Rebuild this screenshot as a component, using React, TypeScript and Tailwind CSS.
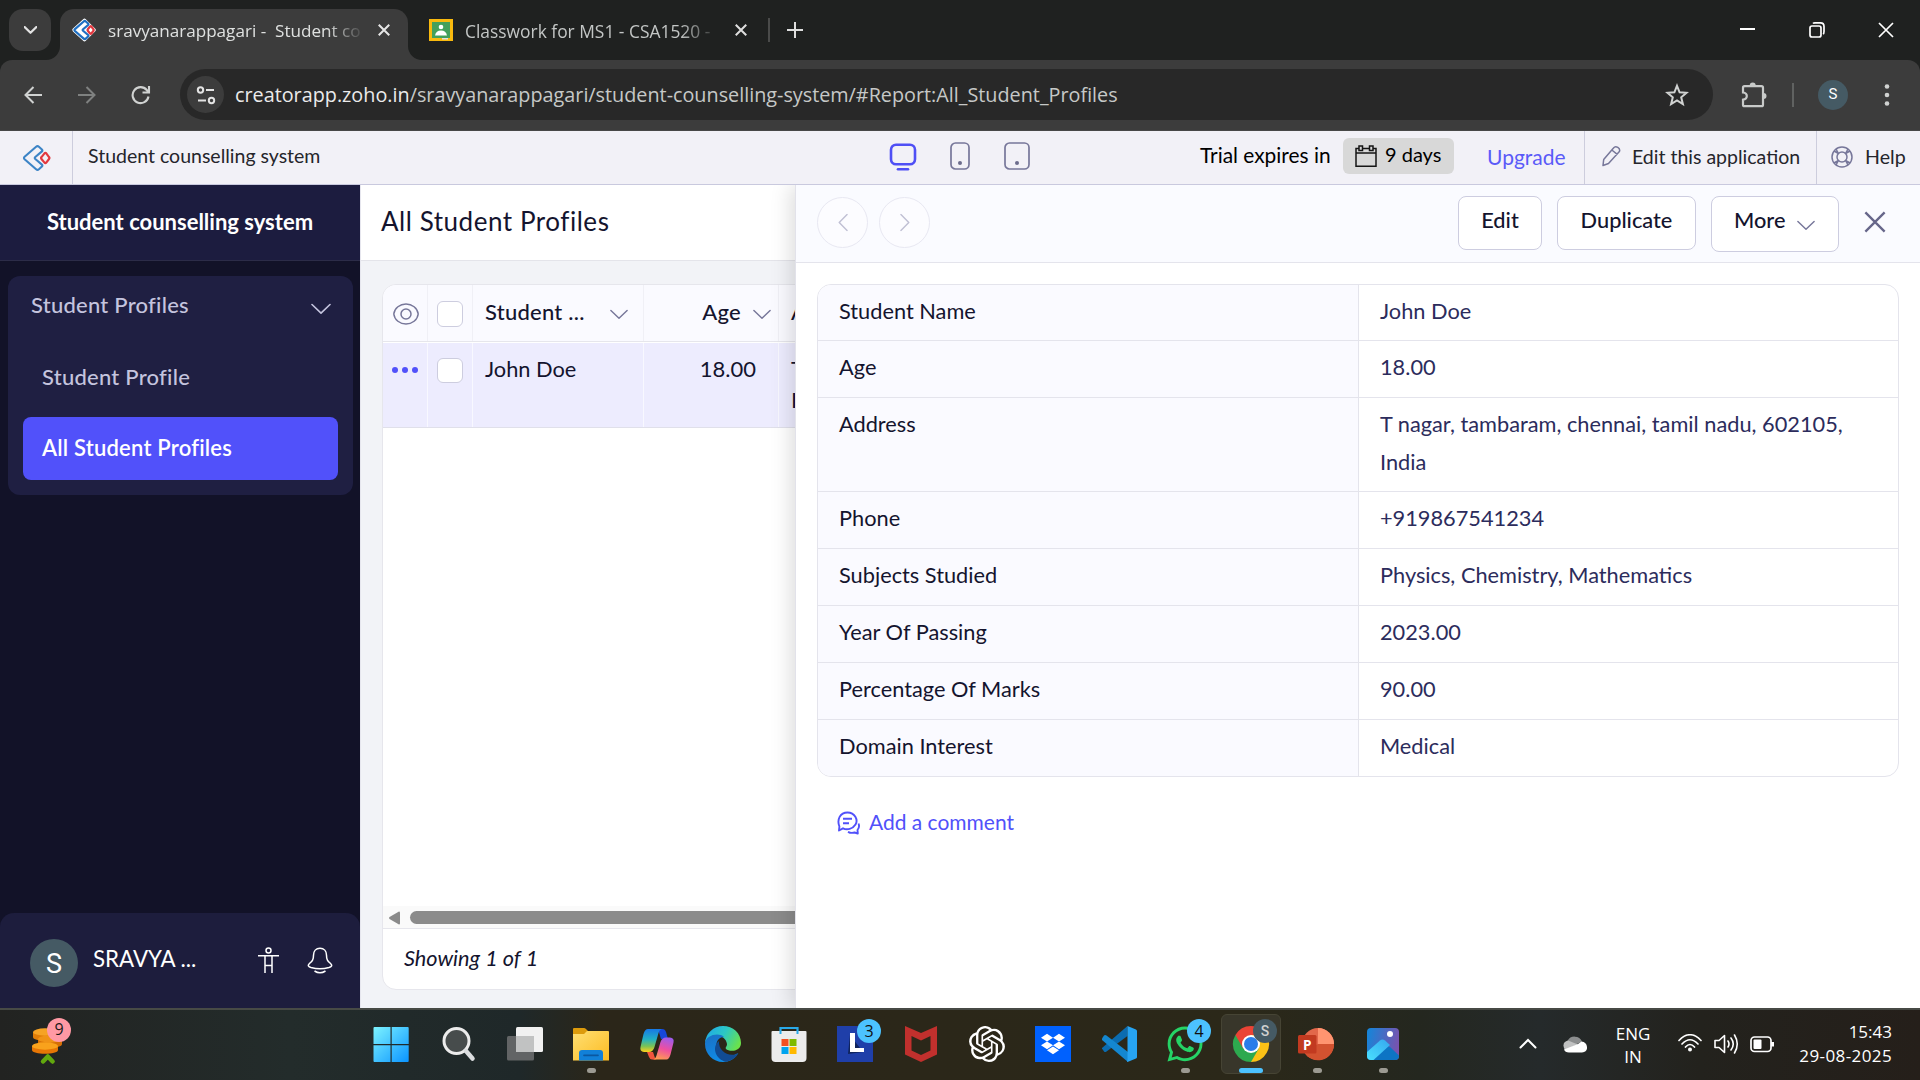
import React from "react";
import { SiOpenai } from "react-icons/si";
import { FaDropbox, FaWhatsapp } from "react-icons/fa";

const details = [
  { label: "Student Name", value: ["John Doe"] },
  { label: "Age", value: ["18.00"] },
  { label: "Address", value: ["T nagar, tambaram, chennai, tamil nadu, 602105,", "India"] },
  { label: "Phone", value: ["+919867541234"] },
  { label: "Subjects Studied", value: ["Physics, Chemistry, Mathematics"] },
  { label: "Year Of Passing", value: ["2023.00"] },
  { label: "Percentage Of Marks", value: ["90.00"] },
  { label: "Domain Interest", value: ["Medical"] },
];

function Chevron({ className, sw = 1.6 }: { className: string; sw?: number }) {
  return (
    <svg viewBox="0 0 20 12" fill="none" stroke="currentColor" strokeWidth={sw} className={className}>
      <path d="M1 1.5l9 8.700 9-8.700" strokeLinecap="round" strokeLinejoin="round" />
    </svg>
  );
}

function Cross({ className, sw = 1.6 }: { className: string; sw?: number }) {
  return (
    <svg viewBox="0 0 16 16" fill="none" stroke="currentColor" strokeWidth={sw} className={className}>
      <path d="M1 1l14 14M15 1L1 15" />
    </svg>
  );
}

function CreatorLogo({ className, backed }: { className: string; backed?: boolean }) {
  return (
    <svg viewBox="0 0 29 28" fill="none" className={className}>
      {backed && (
        <path d="M15.500 1.500L2 14l13.500 12.500L28 14z" fill="#fff" stroke="#fff" strokeWidth="5" strokeLinejoin="round" transform="translate(-.4 0)" />
      )}
      <path
        d="M14.100 2.800L2.600 12.700q-1.300 1.300 0 2.600l11.500 10q1.400 1.200 2.800 0l3-2.700q1-1.100 0-2l-6.600-5.600q-1.100-1 0-2l6.600-5.600q1-1 0-2l-3-2.600q-1.400-1.200-2.800 0z"
        stroke={backed ? "#1f6fc2" : "#3c84c6"}
        strokeWidth={backed ? 3 : 2.1}
      />
      <path
        d="M22.500 9.400l-3 3.700q-.8.900 0 1.900l3 3.600q.9 1 1.800 0l2.700-3.600q.8-1 0-1.900l-2.700-3.700q-.9-.9-1.800 0z"
        stroke="#e2383f"
        strokeWidth={backed ? 2.900 : 2.200}
      />
    </svg>
  );
}

function TabStrip() {
  return (
    <div className="flex h-[60px] shrink-0 bg-[#1f2120] font-['Open_Sans',sans-serif] text-[17.4px]">
      <div className="mt-[9px] ml-[9px] flex h-[42px] w-[42px] items-center justify-center rounded-[14px] bg-[#3c3c3c] text-[#e3e3e3]">
        <Chevron className="h-[8px] w-[13px]" sw={3.4} />
      </div>
      <div className="relative mt-[9px] ml-[9px] flex h-[51px] w-[348px] rounded-t-[14px] bg-[#3c3c3c] text-[#dfe1e0]">
        <svg viewBox="0 0 14 14" className="absolute bottom-0 -left-[14px] h-[14px] w-[14px]"><path d="M14 0v14H0A14 14 0 0014 0z" fill="#3c3c3c" /></svg>
        <svg viewBox="0 0 14 14" className="absolute -right-[14px] bottom-0 h-[14px] w-[14px]"><path d="M0 0v14h14A14 14 0 010 0z" fill="#3c3c3c" /></svg>
        <CreatorLogo backed className="mt-[8px] ml-[11px] h-[26px] w-[26px] shrink-0 overflow-visible p-[2px]" />
        <div className="ml-[11px] w-[254px] text-[17.100px] leading-[44px] whitespace-pre [mask-image:linear-gradient(90deg,#000_86%,transparent_101%)]">sravyanarappagari -  Student co</div>
        <Cross className="mt-[15px] ml-[16px] h-[12px] w-[12px] text-[#e6e6e6]" sw={2.700} />
      </div>
      <svg viewBox="0 0 24 22" className="mt-[19px] ml-[21px] h-[22px] w-[24px]">
        <rect width="24" height="22" fill="#f8b90e" />
        <rect x="3" y="3" width="18" height="16" fill="#43a05c" />
        <circle cx="12" cy="8" r="2.300" fill="#fff" />
        <path d="M6 16.500q1-5 6-5t6 5z" fill="#fff" />
        <path d="M13 19h6v1.500h-6z" fill="#e0e0e0" />
      </svg>
      <div className="mt-[9px] ml-[12px] w-[250px] leading-[44px] whitespace-nowrap text-[#c3c6c5] [mask-image:linear-gradient(90deg,#000_86%,transparent_102%)]">Classwork for MS1 - CSA1520 -</div>
      <Cross className="mt-[24px] ml-[20px] h-[12px] w-[12px] text-[#dedede]" sw={2.700} />
      <div className="mt-[18px] ml-[21px] h-[24px] w-[2px] bg-[#4a4b4a]" />
      <svg viewBox="0 0 16 16" className="mt-[22px] ml-[17px] h-[16px] w-[16px]" stroke="#dedede" strokeWidth="2"><path d="M8 0v16M0 8h16" /></svg>
      <div className="ml-auto flex items-start text-white">
        <div className="mt-[28px] h-[2px] w-[15px] bg-white" />
        <svg viewBox="0 0 16 16" className="mt-[22px] ml-[54px] h-[16px] w-[16px]" fill="none" stroke="#fff" strokeWidth="1.700">
          <rect x="1" y="4" width="11" height="11" rx="2" />
          <path d="M4 1.500q.500-.6 2-.6h5.500q3.500 0 3.500 3.500v5q0 2-1 2.500" />
        </svg>
        <Cross className="mt-[22px] mr-[26px] ml-[53px] h-[16px] w-[16px]" sw={1.700} />
      </div>
    </div>
  );
}

function Toolbar() {
  return (
    <div className="h-[71px] shrink-0 bg-[#1f2120]">
      <div className="flex h-full items-center rounded-t-[12px] border-b border-[#484848] bg-[#3c3c3c] pb-[1px]">
        <svg viewBox="0 0 18 18" className="ml-[24px] h-[18px] w-[18px]" fill="none" stroke="#d0d2d1" strokeWidth="2"><path d="M18 9H1.500M9.500 1L1.500 9l8 8" /></svg>
        <svg viewBox="0 0 18 18" className="ml-[36px] h-[18px] w-[18px]" fill="none" stroke="#7f8180" strokeWidth="2"><path d="M0 9h16.500M8.500 1l8 8-8 8" /></svg>
        <svg viewBox="0 0 20 20" className="ml-[35px] h-[20px] w-[20px]" fill="none" stroke="#d0d2d1" strokeWidth="2.100"><path d="M17.500 11.500a8 8 0 11-1.700-6.500l1.800 2M18 1v6.500h-6.500" /></svg>
        <div className="ml-[29px] flex h-[51px] w-[1533px] items-center rounded-full bg-[#282828] pl-[7px]">
          <div className="flex h-[37px] w-[37px] items-center justify-center rounded-full bg-[#3c3c3c]">
            <svg viewBox="0 0 20 20" className="h-[20px] w-[20px]" fill="none" stroke="#e3e3e3" strokeWidth="2"><circle cx="4.500" cy="5" r="2.700" /><path d="M10 5h8M2 15.500h8" /><circle cx="15.500" cy="15.500" r="2.700" /></svg>
          </div>
          <div className="ml-[11px] font-['Open_Sans',sans-serif] text-[19.8px] leading-[50px] whitespace-nowrap text-[#c6c8c7]">
            <span className="text-[#ebebeb]">creatorapp.zoho.in</span>/sravyanarappagari/student-counselling-system/#Report:All_Student_Profiles
          </div>
          <svg viewBox="0 0 24 24" className="mr-[24px] ml-auto h-[24px] w-[24px]" fill="none" stroke="#d0d2d1" strokeWidth="2"><path d="M12 2.800l2.600 6.500 7 .5-5.400 4.500 1.700 6.900-5.900-3.700-5.900 3.700 1.700-6.900-5.400-4.500 7-.5z" /></svg>
        </div>
        <svg viewBox="0 0 26 26" className="ml-[28px] h-[26px] w-[26px]" fill="none" stroke="#c8cac9" strokeWidth="2.200">
          <path d="M3.500 4.200h17q1.500 0 1.500 1.500v17q0 1.500-1.500 1.500h-17q-1.500 0-1.500-1.500v-5q3.800-.4 3.800-3.600T2 10.500V5.700q0-1.500 1.500-1.500z" />
          <path d="M8.700 3.500a3 3 0 016 0zM22.500 11a3 3 0 010 6z" fill="#c8cac9" stroke="none" />
        </svg>
        <div className="ml-[25px] h-[24px] w-[2px] bg-[#606261]" />
        <div className="ml-[24px] flex h-[30px] w-[30px] items-center justify-center rounded-full bg-[#455a64] font-['Roboto',sans-serif] text-[15px] text-white">S</div>
        <svg viewBox="0 0 6 24" className="ml-[36px] h-[24px] w-[6px]" fill="#d0d2d1"><circle cx="3" cy="3.500" r="2.300" /><circle cx="3" cy="12" r="2.300" /><circle cx="3" cy="20.500" r="2.300" /></svg>
      </div>
    </div>
  );
}

function AppHeader() {
  return (
    <div className="flex h-[54px] shrink-0 border-b border-[#c9c9de] bg-[#f2f1f7] text-[#25252b]">
      <div className="flex w-[73px] border-r border-[#cdcddd]"><CreatorLogo className="mt-[13px] ml-[22px] h-[28px] w-[29px]" /></div>
      <div className="w-[814px] pl-[15px] text-[19.500px] leading-[49px]">Student counselling system</div>
      <svg viewBox="0 0 30 30" className="mt-[11px] h-[30px] w-[30px]" fill="none" stroke="#4f4ff5" strokeWidth="2.600"><rect x="4" y="2.700" width="24" height="19.500" rx="5" /><path d="M11 27.300h10" strokeLinecap="round" /></svg>
      <svg viewBox="0 0 20 28" className="mt-[11px] ml-[33px] h-[28px] w-[20px]" fill="none" stroke="#77779a" strokeWidth="1.700"><rect x="1" y="1" width="18" height="26" rx="4.500" /><circle cx="10" cy="21" r="2" fill="#6c6c8c" stroke="none" /></svg>
      <svg viewBox="0 0 26 28" className="mt-[11px] ml-[34px] h-[28px] w-[26px]" fill="none" stroke="#77779a" strokeWidth="1.700"><rect x="1" y="1" width="24" height="26" rx="4.500" /><circle cx="13" cy="21" r="2" fill="#6c6c8c" stroke="none" /></svg>
      <div className="ml-auto flex w-[384px] text-[20.900px] leading-[48px] whitespace-nowrap text-black">
        <div className="w-[143px]">Trial expires in</div>
        <div className="mt-[7px] flex h-[36px] w-[111px] rounded-[6px] bg-[#d8d8d8] pl-[12px] text-[20px] leading-[33px]">
          <svg viewBox="0 0 22 22" className="mt-[7px] mr-[8px] h-[22px] w-[22px]" fill="none" stroke="#151515" strokeWidth="1.500"><path d="M4 3.500H1v17.700h20V3.500h-3M7.500 3.500h7M1 8h20" /><rect x="4" y="1" width="3.500" height="4.500" /><rect x="14.500" y="1" width="3.500" height="4.500" /></svg>
          9 days
        </div>
        <div className="pl-[33px] text-[21px] leading-[51px] text-[#5a5af8]">Upgrade</div>
      </div>
      <div className="flex w-[232px] border-l border-[#cdcddd] pl-[16px] text-[19.500px] leading-[51px] whitespace-nowrap">
        <svg viewBox="0 0 20 22" className="mt-[14px] mr-[11px] h-[22px] w-[20px]" fill="none" stroke="#77779a" strokeWidth="1.500" strokeLinejoin="round"><path d="M12.500 3q1.700-2.200 4.300-.6t1.600 4.200L7.500 18.500 2 20.500l.7-6zM10.800 5l5.500 4.300" /></svg>
        <span>Edit this application</span>
      </div>
      <div className="flex w-[104px] border-l border-[#cdcddd] pl-[14px] text-[19.600px] leading-[51px]">
        <svg viewBox="0 0 22 22" className="mt-[15px] mr-[12px] h-[22px] w-[22px]" fill="none" stroke="#77779a" strokeWidth="1.500"><circle cx="11" cy="11" r="10" /><circle cx="11" cy="11" r="5" /><path d="M3 5l4.500 2.500M5 3l2.500 4.500M19 5l-4.500 2.500M17 3l-2.500 4.500M3 17l4.500-2.500M5 19l2.500-4.500M19 17l-4.500-2.500M17 19l-2.500-4.500" /></svg>
        Help
      </div>
    </div>
  );
}

function Sidebar() {
  return (
    <div className="flex w-[360px] shrink-0 flex-col bg-[#121228]">
      <div className="h-[76px] border-b border-[#2c2c48] bg-[#1c1c3f] text-center text-[22px] leading-[74px] font-bold text-white">Student counselling system</div>
      <div className="mt-[15px] ml-[8px] flex h-[219px] w-[345px] flex-col rounded-[12px] bg-[#1f1f42] text-[22px] font-medium tracking-[0.240px] text-[#c4c4de]">
        <div className="flex justify-between pr-[22px] pl-[23px] leading-[57px]">
          Student Profiles
          <Chevron className="mt-[27px] h-[12px] w-[20px]" />
        </div>
        <div className="pt-[8px] pl-[34px] leading-[71px]">Student Profile</div>
        <div className="mt-[5px] ml-[15px] h-[63px] w-[315px] rounded-[8px] bg-[#5151fa] pl-[19px] leading-[61px] font-semibold tracking-[0.200px] text-white">All Student Profiles</div>
      </div>
      <div className="mt-auto flex h-[95px] rounded-t-[14px] bg-[#1d1d3d] text-white">
        <div className="mt-[26px] ml-[30px] flex h-[48px] w-[48px] items-center justify-center rounded-full bg-[#455a64] pt-[2px] font-['Roboto',sans-serif] text-[27px]">S</div>
        <div className="ml-[15px] w-[164px] text-[22.300px] leading-[92px]">SRAVYA ...</div>
        <svg viewBox="0 0 22 28" className="mt-[34px] h-[28px] w-[22px]" fill="none" stroke="#fff" strokeWidth="1.500"><circle cx="11.500" cy="3.500" r="2.500" /><path d="M1 8.700h21M8 9v17M15 9v17M8 18.500h7" /></svg>
        <svg viewBox="0 0 26 28" className="mt-[34px] ml-[28px] h-[28px] w-[26px]" fill="none" stroke="#fff" strokeWidth="1.500"><path d="M13 1.200c-4 0-6.500 3-6.500 7 0 5-1.500 6-4 8.300-2.500 2.300-.5 3.300 1.500 4q9 2.400 18 0c2-.7 4-1.700 1.500-4-2.500-2.300-4-3.300-4-8.300 0-4-2.500-7-6.500-7zM7.500 24q5.500 3.500 11 0" /></svg>
      </div>
    </div>
  );
}

function Checkbox({ className }: { className: string }) {
  return <div className={"w-[26px] rounded-[6px] border border-[#cdcddf] bg-white " + className} />;
}

function ReportList() {
  return (
    <div className="flex w-[435px] shrink-0 flex-col overflow-hidden border-l border-[#e6e6ee] bg-[#f2f3f7] text-[22px] text-[#14142e]">
      <div className="h-[76px] border-b border-[#e4e4ea] bg-white pl-[20px] text-[26px] leading-[72px] tracking-[0.540px]">All Student Profiles</div>
      <div className="mt-[23px] ml-[21px] flex h-[706px] w-[900px] flex-col overflow-hidden rounded-[14px] border border-[#e6e6ec] bg-white">
        <div className="flex h-[57px] border-b border-[#e6e6ec] bg-[#fafaff] leading-[53px] font-medium tracking-[0.240px]">
          <div className="flex w-[45px] border-r border-[#f0f0f6] pl-[10px]">
            <svg viewBox="0 0 26 22" className="mt-[18px] h-[22px] w-[26px]" fill="none" stroke="#77779a" strokeWidth="1.500"><path d="M.8 11C1.500 5 7 1 13 1s11.500 4 12.200 10C24.500 17 19 21 13 21S1.500 17 .8 11z" /><circle cx="13" cy="11" r="5" /></svg>
          </div>
          <div className="w-[45px] border-r border-[#f0f0f6] pt-[16px] pl-[9px]"><Checkbox className="h-[26px]" /></div>
          <div className="flex w-[171px] border-r border-[#f0f0f6] pl-[12px]">
            <div className="w-[125px]">Student ...</div>
            <Chevron className="mt-[24px] h-[11px] w-[18px] text-[#77779a]" />
          </div>
          <div className="flex w-[135px] justify-end border-r border-[#f0f0f6] pr-[7px]">
            Age
            <Chevron className="mt-[24px] ml-[12px] h-[11px] w-[18px] text-[#77779a]" />
          </div>
          <div className="pl-[12px]">Address</div>
        </div>
        <div className="mt-[1px] flex h-[85px] border-b border-[#e0e0ea] bg-[#edecfe] leading-[31px]">
          <div className="flex w-[45px] gap-[4px] border-r border-[#f8f8ff] pt-[24px] pl-[9px]">
            <div className="h-[6px] w-[6px] rounded-full bg-[#5151fa]" />
            <div className="h-[6px] w-[6px] rounded-full bg-[#5151fa]" />
            <div className="h-[6px] w-[6px] rounded-full bg-[#5151fa]" />
          </div>
          <div className="w-[45px] border-r border-[#f8f8ff] pt-[15px] pl-[9px]"><Checkbox className="h-[25px]" /></div>
          <div className="w-[171px] border-r border-[#f8f8ff] pt-[10px] pl-[12px] text-[21.800px]">John Doe</div>
          <div className="w-[135px] border-r border-[#f8f8ff] pt-[10px] pr-[22px] text-right">18.00</div>
          <div className="pt-[10px] pl-[12px]">T nagar,<br />India</div>
        </div>
        <div className="mt-auto flex h-[22px] items-center bg-[#fafafa] pt-[1px] pl-[6px]">
          <svg viewBox="0 0 11 14" className="h-[14px] w-[11px]" fill="#8a8a8a"><path d="M10 .5q1 0 1 1v11q0 1-1 1L.5 8q-.8-1 0-2z" /></svg>
          <div className="ml-[10px] h-[13px] w-[600px] rounded-full bg-[#8b8b8b]" />
        </div>
        <div className="h-[61px] border-t border-[#e6e6ec] pl-[21px] text-[21.700px] leading-[59px] italic">Showing 1 of 1</div>
      </div>
    </div>
  );
}

function DetailPane() {
  const btn = "rounded-[8px] border border-[#cdcde0] bg-white leading-[47px] text-center";
  return (
    <div className="z-10 flex grow flex-col border-l border-[#e2e2ea] bg-white text-[21.780px] text-[#14142e] shadow-[-4px_0_20px_rgba(0,0,0,0.14)]">
      <div className="flex h-[78px] border-b border-[#e4e4ec] bg-[#fafbff] pt-[11px] pl-[21px]">
        <div className="mt-[1px] mr-[11px] flex h-[51px] w-[51px] items-center justify-center rounded-full border border-[#e8e8f2] bg-[#fcfcff] text-[#c0c0d4]"><Chevron className="h-[11px] w-[18px] rotate-90" /></div>
        <div className="mt-[1px] flex h-[51px] w-[51px] items-center justify-center rounded-full border border-[#e8e8f2] bg-[#fcfcff] text-[#c0c0d4]"><Chevron className="h-[11px] w-[18px] -rotate-90" /></div>
        <div className="mr-[34px] ml-auto flex items-start gap-[15px]">
          <div className={btn + " h-[54px] w-[84px] font-medium"}>Edit</div>
          <div className={btn + " h-[54px] w-[139px] font-medium"}>Duplicate</div>
          <div className={btn + " flex h-[56px] w-[128px] pl-[22px] font-medium"}>More<Chevron className="mt-[23px] ml-[12px] h-[11px] w-[18px] text-[#77779a]" /></div>
          <Cross className="mt-[15px] ml-[10px] h-[22px] w-[22px] text-[#66668a]" sw={1.700} />
        </div>
      </div>
      <div className="mt-[21px] ml-[21px] w-[1082px] overflow-hidden rounded-[14px] border border-[#e4e4ec]">
        {details.map((d, i) => (
          <div key={d.label} className={i === 0 ? "flex h-[55px] leading-[38px]" : d.value.length > 1 ? "flex h-[94px] border-t border-[#e4e4ec] leading-[38px]" : "flex h-[57px] border-t border-[#e4e4ec] leading-[38px]"}>
            <div className="w-[541px] border-r border-[#e4e4ec] bg-[#fafaff] pt-[7px] pl-[21px]">{d.label}</div>
            <div className="pt-[7px] pl-[21px] text-[#2c2c5c]">{d.value.map((v) => <div key={v}>{v}</div>)}</div>
          </div>
        ))}
      </div>
      <div className="mt-[27px] ml-[41px] flex text-[20.970px] leading-[36px] text-[#5151fa]">
        <svg viewBox="0 0 24 24" className="mt-[7px] mr-[8px] h-[24px] w-[24px]" fill="none" stroke="#5151fa" strokeWidth="1.900" strokeLinejoin="round"><path d="M2 19.500l.4-4C-.3 8.500 3 1.500 10.500 1.500S21.300 9 18.500 13.500s-8.500 6-12.500 3.800zM6 7.700h9M6 12.200h6M21.500 12.500q1.500 3.500-1 6.500l.3 3.500-3.300-1q-3.500 1-6.500-.7" /></svg>
        Add a comment
      </div>
    </div>
  );
}

function Badge({ children }: { children: string }) {
  return <div className="absolute -top-[7px] -right-[8px] flex h-[24px] w-[24px] items-center justify-center rounded-full bg-[#4cc2ff] text-[16px] leading-[24px] text-[#101010]">{children}</div>;
}

function TaskIcon({ children, dot, active }: { children: React.ReactNode; dot?: boolean; active?: boolean }) {
  return (
    <div className={active ? "flex h-[60px] w-[60px] flex-col items-center rounded-[6px] border border-[#464434] bg-[#38362a]" : "flex h-[60px] w-[60px] flex-col items-center border border-transparent"}>
      <div className="relative mt-[11px] h-[36px] w-[36px]">{children}</div>
      {dot && <div className="mt-[6px] h-[5px] w-[9px] rounded-full bg-[#9c9a92]" />}
      {active && <div className="mt-[6px] h-[5px] w-[24px] rounded-full bg-[#4cc2ff]" />}
    </div>
  );
}

const full = "h-[36px] w-[36px] overflow-visible";

function Taskbar() {
  return (
    <div className="flex h-[72px] shrink-0 border-t-2 border-[#474a45] bg-[linear-gradient(90deg,#222321_0px,#232c2b_290px,#1f2829_520px,#2b2619_600px,#2b2819_1250px,#24271f_1420px,#252a2b_1540px,#23221d_1700px,#251f1a_1920px)] font-['Open_Sans',sans-serif] text-white">
      <div className="w-[361px] pt-[8px] pl-[31px]">
        <div className="relative h-[50px] w-[42px]">
          <svg viewBox="0 0 42 50" className="h-[50px] w-[42px]">
            <path d="M2 14v5c0 5 24 5 24 0v-5z" fill="#e07d08" /><ellipse cx="14" cy="14" rx="12" ry="3.700" fill="#f6a325" />
            <path d="M7 21v5c0 5 24 5 24 0v-5z" fill="#d56f05" /><ellipse cx="19" cy="21" rx="12" ry="3.700" fill="#f09317" />
            <path d="M1 28v4c0 5 26 5 26 0v-4z" fill="#e67605" /><ellipse cx="14" cy="28" rx="13" ry="3.700" fill="#f9a21c" />
            <path d="M12 43.500l4.800-5 4.800 5" fill="none" stroke="#62a80e" strokeWidth="4.500" strokeLinecap="round" strokeLinejoin="round" />
          </svg>
          <div className="absolute top-0 left-[16px] h-[24px] w-[24px] rounded-full bg-[#ff99a4] text-center text-[16px] leading-[23px] text-[#1a1a1a]">9</div>
        </div>
      </div>
      <div className="flex gap-[6px] pt-[4px]">
        <TaskIcon>
          <svg viewBox="0 0 36 36" className={full}>
            <defs><linearGradient id="win" x1="0" y1="0" x2="1" y2="1" gradientUnits="objectBoundingBox"><stop stopColor="#7df3ff" /><stop offset="1" stopColor="#0a94ff" /></linearGradient></defs>
            <path d="M1.500 1h16v17h-17V2q0-1 1-1zM18.700 1h16q1 0 1 1v16h-17zM.5 19.200h17V36h-16q-1 0-1-1zM18.700 19.200h17V35q0 1-1 1h-16z" fill="url(#win)" />
          </svg>
        </TaskIcon>
        <div className="w-[62px] pl-[2px]">
          <TaskIcon>
            <svg viewBox="0 0 36 36" className={full} fill="none"><circle cx="15.500" cy="15" r="12.500" fill="#474c4c" stroke="#ececec" strokeWidth="3" /><path d="M25 25l6.500 7.500" stroke="#dcdee0" strokeWidth="4.500" strokeLinecap="round" /></svg>
          </TaskIcon>
        </div>
        <TaskIcon>
          <svg viewBox="0 0 36 36" className={full}><rect y="10" width="27" height="24.500" rx="1.500" fill="#626465" /><rect x="9" y="1" width="27" height="25" rx="1.500" fill="#f1f1f1" /><path d="M9 10h18v16H9z" fill="#c1c2c2" /></svg>
        </TaskIcon>
        <TaskIcon dot>
          <svg viewBox="0 0 36 36" className={full}>
            <defs><linearGradient id="fld" x1="0" y1="0" x2="1" y2="1"><stop stopColor="#ffdf73" /><stop offset="1" stopColor="#fcbc22" /></linearGradient></defs>
            <path d="M0 3q0-1 1-1h10q1 0 2 1l3 3v6H0z" fill="#dd9b0c" /><path d="M0 8h11l3-3h21q1 0 1 1v28.500H0z" fill="url(#fld)" /><path d="M6 34.500V27q0-3 3-3h18q3 0 3 3v7.500z" fill="#1180d8" /><path d="M11 29.300h14" stroke="#0b57a0" strokeWidth="1.700" strokeLinecap="round" />
          </svg>
        </TaskIcon>
        <TaskIcon>
          <svg viewBox="0 0 36 36" className={full}>
            <defs>
              <linearGradient id="cp1" x1="0" y1="0" x2="0" y2="1"><stop stopColor="#1778e6" /><stop offset=".45" stopColor="#22b0c4" /><stop offset=".75" stopColor="#7bc255" /><stop offset="1" stopColor="#ffd01b" /></linearGradient>
              <linearGradient id="cp2" x1=".6" y1="0" x2=".3" y2="1"><stop stopColor="#a05bea" /><stop offset=".5" stopColor="#ee4fa0" /><stop offset="1" stopColor="#ff9d50" /></linearGradient>
            </defs>
            <path d="M19 3h4.500q2.500 0 3.500 3l2 7h-7z" fill="#1747d8" />
            <path d="M9 3h14q-2.500.5-3.500 4l-4 14q-1.500 5-5.500 5H5q-4.500-.5-3.500-5l3-13Q6 3 9 3z" fill="url(#cp1)" />
            <path d="M8 26h6l2 6q.6 1.500 2 1.500h-5q-2 0-3-2.500z" fill="#f2553d" />
            <path d="M27.500 33.500H14q2.500-.5 3.500-4l4-13.500q1.500-4.500 5.500-4.500h4q4.500.5 3.500 5l-3 12q-1.500 5-4 5z" fill="url(#cp2)" />
          </svg>
        </TaskIcon>
        <TaskIcon>
          <svg viewBox="0 0 36 36" className={full}>
            <defs>
              <linearGradient id="ed1" x1="0" y1=".2" x2="1" y2=".6"><stop stopColor="#1fa8e8" /><stop offset=".5" stopColor="#2cc8c4" /><stop offset="1" stopColor="#6be24a" /></linearGradient>
              <linearGradient id="ed2" x1="0" y1="0" x2=".4" y2="1"><stop stopColor="#1b6fc4" /><stop offset="1" stopColor="#0f8de8" /></linearGradient>
            </defs>
            <path d="M18 0a18 18 0 00-18 17C3 9 20 6 22 18c0 3-2 3-1 5 3 3 15 3 15-6C36 7 28 0 18 0z" fill="url(#ed1)" />
            <path d="M0 18C0 9 14 6 19 11c-6 0-9 6-7 12 3 8 12 10 21 4-3 6-9 9-15 9C8 36 0 28 0 18z" fill="url(#ed2)" />
            <path d="M14 15c-8 6-3 19 7 20.700 6-1.200 10-4 12.500-8.500C24 32 13 25 14 15z" fill="#114b93" />
          </svg>
        </TaskIcon>
        <TaskIcon>
          <svg viewBox="0 0 36 36" className={full}>
            <path d="M9.500 8V2h17v6" fill="none" stroke="#29a9e8" strokeWidth="2.200" /><path d="M.5 6q0-1 1-1h33q1 0 1 1v26q0 4-4 4h-27q-4 0-4-4z" fill="#ececec" /><path d="M8.500 5v3h2V5M25.500 5v3h2V5" fill="#29a9e8" />
            <path d="M10.500 13h7v7h-7z" fill="#f25022" /><path d="M18.500 13h7v7h-7z" fill="#7fba00" /><path d="M10.500 21h7v7h-7z" fill="#00a4ef" /><path d="M18.500 21h7v7h-7z" fill="#ffb900" />
          </svg>
        </TaskIcon>
        <TaskIcon>
          <svg viewBox="0 0 36 36" className={full}><path d="M0 0h36v36H0z" fill="#1f3fa9" /><path d="M13 9l-2 19 15-2z" fill="#10245c" /><path d="M13 7h5v15h9v4H13z" fill="#fff" /></svg>
          <Badge>3</Badge>
        </TaskIcon>
        <TaskIcon>
          <svg viewBox="0 0 36 36" className={full}><path d="M2 0l16 7 16-7v28.500L18 36 2 28.500zM8.500 10v14.500L18 29l9.500-4.500V10L18 14.500z" fillRule="evenodd" fill="#c1302d" /></svg>
        </TaskIcon>
        <TaskIcon><SiOpenai className="h-[36px] w-[36px]" /></TaskIcon>
        <TaskIcon><div className="flex h-[36px] w-[36px] items-center justify-center bg-[#0061fe]"><FaDropbox className="h-[24px] w-[24px]" /></div></TaskIcon>
        <TaskIcon>
          <svg viewBox="0 0 36 36" className={full}>
            <path d="M1 22.500l2 3q1 1 2.500 0L26.500 10V0L1 22z" fill="#0b6cb0" /><path d="M1 12.500l2-3q1-1 2.500 0L27 26v10L1 14z" fill="#1487d0" /><path d="M26.500 0L35 3.500q1 .5 1 1.500v26q0 1-1 1.500L26.500 36q-1-.5 0-2z" fill="#27a4f2" />
          </svg>
        </TaskIcon>
        <TaskIcon dot><FaWhatsapp className="h-[40px] w-[40px] -translate-x-[2px] -translate-y-[2px] text-[#25d366]" /><Badge>4</Badge></TaskIcon>
        <TaskIcon active>
          <svg viewBox="0 0 36 36" className={full}>
            <path d="M18 18L2.410 9A18 18 0 0133.590 9z" fill="#ea4335" /><path d="M18 18l15.590-9A18 18 0 0118 36z" fill="#fbc116" /><path d="M18 18v18A18 18 0 012.410 9z" fill="#2da94f" />
            <path d="M18 9h15.590L25.800 22.500z" fill="#fbc116" /><path d="M25.800 22.500L18 36l-7.800-13.500z" fill="#2da94f" /><path d="M2.410 9L10.200 22.500 18 9z" fill="#ea4335" />
            <circle cx="18" cy="18" r="9" fill="#fff" /><circle cx="18" cy="18" r="7" fill="#2a7de9" />
          </svg>
          <div className="absolute -top-[7px] -right-[8px] flex h-[24px] w-[24px] items-center justify-center rounded-full bg-[#455a64] font-['Roboto',sans-serif] text-[14px] font-medium text-[#d0d0d0]">S</div>
        </TaskIcon>
        <TaskIcon dot>
          <svg viewBox="0 0 36 36" className={full}>
            <path d="M19 2a16 16 0 100 32 16 16 0 000-32z" fill="#e2674a" /><path d="M19 2a16 16 0 0116 16H19z" fill="#ff9470" /><path d="M35 18a16 16 0 01-30 8l14-8z" fill="#d35230" />
            <rect x="-1" y="9" width="18.500" height="18.500" rx="1.500" fill="#c23a20" /><text x="8.200" y="23.500" textAnchor="middle" fontFamily="Open Sans" fontWeight="700" fontSize="13.500" fill="#fff">P</text>
          </svg>
        </TaskIcon>
        <TaskIcon dot>
          <svg viewBox="0 0 36 36" className={full}>
            <defs><linearGradient id="ph" x1="0" y1=".3" x2="1" y2=".5"><stop stopColor="#1784d8" /><stop offset="1" stopColor="#7a52ae" /></linearGradient><linearGradient id="ph2" x1="0" y1="1" x2="1" y2="0"><stop stopColor="#4ae0ff" /><stop offset="1" stopColor="#35a7ee" /></linearGradient></defs>
            <rect x="2" y="2" width="32" height="32" rx="4" fill="url(#ph)" /><path d="M8 34l14-13q1.500-1 3 0l9 8.500V30q0 4-4 4z" fill="#0d74c4" /><path d="M2 26l13-11.500q2.500-2 5 0l5 4.500L8.500 34H6q-4 0-4-4z" fill="url(#ph2)" /><circle cx="25" cy="8" r="3" fill="#fff" />
          </svg>
        </TaskIcon>
      </div>
      <div className="mr-[28px] ml-auto flex text-[17px] leading-[23px]">
        <svg viewBox="0 0 18 11" className="mt-[28px] h-[11px] w-[18px]" fill="none" stroke="#fff" strokeWidth="2"><path d="M1.500 9.500L9 2l7.500 7.500" strokeLinecap="round" /></svg>
        <svg viewBox="0 0 24 17" className="mt-[26px] ml-[26px] h-[17px] w-[24px]"><path d="M4.500 5A8 8 0 0119 5.500L12 9z" fill="#8c8e8f" /><path d="M1 12q-2-6 4-7.500L15 8.500 2 14z" fill="#c0c1c1" /><path d="M15 8l3.500-2.500q5 .5 5.500 5.500t-5 5.500H6Q2 16.500 1 13.500z" fill="#fff" /></svg>
        <div className="mt-[12px] ml-[26px] w-[40px] text-center">ENG<br />IN</div>
        <svg viewBox="0 0 24 18" className="mt-[24px] ml-[25px] h-[18px] w-[24px]" fill="none" stroke="#fff" strokeWidth="1.700" strokeLinecap="round"><path d="M1 6.500q11-11.500 22 0M4 10q8-8.500 16 0M7.500 13q4.500-5 9 0" /><circle cx="12" cy="15.500" r="2" fill="#fff" stroke="none" /></svg>
        <svg viewBox="0 0 25 20" className="mt-[24px] ml-[12px] h-[20px] w-[25px]" fill="none" stroke="#fff" strokeWidth="1.600" strokeLinejoin="round" strokeLinecap="round"><path d="M1 6.500h4l5.500-5v17l-5.500-5H1zM14 7q2 3 0 6M17 4q4.500 6 0 12M20.500 1q5.500 9 0 18" /></svg>
        <svg viewBox="0 0 25 17" className="mt-[26px] ml-[11px] h-[17px] w-[25px]" fill="none" stroke="#fff" strokeWidth="1.700"><rect x="1" y="1" width="20" height="14.500" rx="3.500" /><rect x="3.500" y="3.500" width="8" height="9.500" rx="1" fill="#fff" stroke="none" /><path d="M22.500 6v4.500" strokeWidth="3" /></svg>
        <div className="mt-[10px] ml-[22px] w-[95px] text-right leading-[24px]">15:43<br /><span className="tracking-[0.400px]">29-08-2025</span></div>
      </div>
    </div>
  );
}

export default function App() {
  return (
    <div className="flex h-[1080px] w-[1920px] flex-col overflow-hidden bg-white font-['Lato',sans-serif]">
      <TabStrip />
      <Toolbar />
      <AppHeader />
      <div className="flex h-[823px] shrink-0 overflow-hidden">
        <Sidebar />
        <ReportList />
        <DetailPane />
      </div>
      <Taskbar />
    </div>
  );
}
